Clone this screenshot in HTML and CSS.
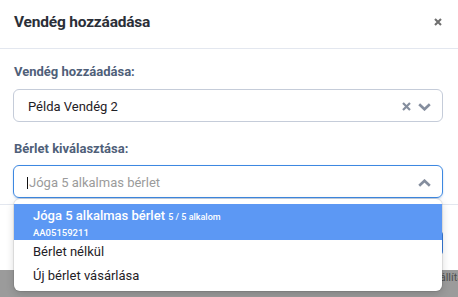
FILE: index.html
```html
<!DOCTYPE html>
<html lang="hu">
<head>
<meta charset="utf-8">
<link rel="stylesheet" href="styles.css">
</head>
<body>
<div class="modal">
  <div class="header">
    <h1 class="title">Vendég hozzáadása</h1>
    <svg class="close" width="8" height="8" viewBox="0 0 8 8"><path d="M1 1 L7 7 M7 1 L1 7" stroke="#6f6f6f" stroke-width="2.1" fill="none"/></svg>
  </div>
  <div class="body">
    <div class="label">Vendég hozzáadása:</div>
    <div class="select">
      <span class="value">Példa Vendég 2</span>
      <span class="icons">
        <svg class="ico" width="9" height="9" viewBox="0 0 9 9"><path d="M1 1 L8 8 M8 1 L1 8" stroke="#858e9e" stroke-width="2.2" fill="none"/></svg>
        <svg class="ico" width="13" height="8" viewBox="0 0 13 8"><path d="M1.2 1.2 L6.5 6.3 L11.8 1.2" stroke="#858e9e" stroke-width="2.6" fill="none"/></svg>
      </span>
    </div>
    <div class="label label2">Bérlet kiválasztása:</div>
    <div class="select focus">
      <span class="caret"></span>
      <span class="placeholder">Jóga 5 alkalmas bérlet</span>
      <span class="icons">
        <svg class="ico" width="13" height="8" viewBox="0 0 13 8"><path d="M1.2 6.8 L6.5 1.7 L11.8 6.8" stroke="#858e9e" stroke-width="2.6" fill="none"/></svg>
      </span>
    </div>
  </div>
  <div class="footer">
    <button class="btn">Mentés</button>
  </div>
  <div class="menu">
    <div class="opt selected">
      <div class="opt-main">Jóga 5 alkalmas bérlet <span class="small">5 / 5 alkalom</span></div>
      <div class="code">AA05159211</div>
    </div>
    <div class="opt">Bérlet nélkül</div>
    <div class="opt">Új bérlet vásárlása</div>
  </div>
</div>
<div class="below">Beállítások</div>
</body>
</html>
```

FILE: styles.css
```css
html, body {
  margin: 0;
  padding: 0;
}
body {
  background: #9b9b9b;
  font-family: Roboto, "Noto Sans", sans-serif;
  width: 458px;
  height: 297px;
  overflow: hidden;
}
.modal {
  position: relative;
  background: #fff;
  height: 270px;
}
.header {
  height: 43px;
  padding: 0 16px 5px 14px;
  display: flex;
  align-items: center;
  justify-content: space-between;
  border-bottom: 1px solid #e3e7ef;
}
.title {
  margin: 0;
  font-size: 15.5px;
  line-height: 20px;
  font-weight: 700;
  color: #2b2f38;
  letter-spacing: -0.2px;
}
.close {
  display: block;
}
.body {
  padding: 15px 15px 0 13px;
}
.label {
  font-size: 13px;
  line-height: 16px;
  font-weight: 700;
  color: #4f6079;
  padding-left: 1px;
  margin-bottom: 9px;
}
.label2 {
  margin-top: 19px;
  margin-bottom: 8px;
}
.select {
  height: 31px;
  border: 1px solid #c5ccd9;
  border-radius: 6px;
  display: flex;
  align-items: center;
  padding: 2px 11px 0 14px;
  box-sizing: border-box;
  height: 33px;
}
.select.focus {
  border-color: #3d88e1;
  box-shadow: 0 1px 2px rgba(60, 120, 200, 0.3);
}
.value {
  flex: 1;
  font-size: 13px;
  color: #1f2126;
}
.placeholder {
  flex: 1;
  font-size: 13px;
  color: #9b9b9b;
}
.caret {
  width: 1px;
  height: 12px;
  background: #111;
  margin-left: -1px;
  margin-right: 1px;
}
.icons {
  display: flex;
  align-items: center;
  gap: 7px;
}
.ico {
  display: block;
}
.footer {
  margin-top: 6px;
  border-top: 1px solid #e3e7ef;
  display: flex;
  justify-content: flex-end;
  padding: 26px 15px 0 0;
}
.btn {
  height: 24px;
  border: 0;
  border-radius: 4px;
  background: #3b82e6;
  color: #fff;
  padding: 0 16px;
  font-family: inherit;
  font-size: 13px;
}
.menu {
  position: absolute;
  left: 14px;
  top: 199px;
  width: 428px;
  background: #fff;
  border-radius: 6px;
  box-shadow: 0 0 0 1px rgba(0, 0, 0, 0.08), 0 3px 8px rgba(0, 0, 0, 0.16);
  padding: 5px 0 3px;
}
.opt {
  font-size: 13px;
  color: #1f2126;
  padding: 0 19px;
  height: 24px;
  line-height: 24px;
}
.opt.selected {
  background: #5c98f4;
  color: #fff;
  height: 36px;
  line-height: normal;
  padding-top: 3px;
  box-sizing: border-box;
}
.opt-main {
  font-weight: 500;
  font-size: 13px;
  line-height: 18px;
}
.small {
  font-size: 9px;
  font-weight: 500;
}
.code {
  font-size: 9.5px;
  line-height: 12px;
  font-weight: 500;
  margin-top: 1px;
}
.below {
  padding-left: 427px;
  font-size: 11px;
  color: #505050;
  white-space: nowrap;
  line-height: 13px;
  margin-top: 1px;
}
```
